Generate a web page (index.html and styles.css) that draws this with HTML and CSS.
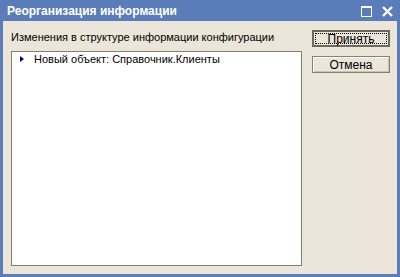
FILE: index.html
```html
<!DOCTYPE html>
<html lang="ru">
<head>
  <meta charset="UTF-8">
  <title>Реорганизация информации</title>
  <link rel="stylesheet" href="styles.css">
</head>
<body>
  <!-- окно диалога -->
  <div class="window">
    <div class="titlebar">
      <span class="title">Реорганизация информации</span>
      <div class="title-buttons">
        <span class="icon-max"></span>
        <svg class="icon-close" width="11" height="11" viewBox="0 0 11 11">
          <path d="M1 1 L10 10 M10 1 L1 10" stroke="#fff" stroke-width="2.4" fill="none"/>
        </svg>
      </div>
    </div>

    <div class="content">
      <div class="main">
        <div class="label">Изменения в структуре информации конфигурации</div>
        <div class="tree">
          <div class="tree-item">
            <span class="arrow"></span>
            <span>Новый объект: Справочник.Клиенты</span>
          </div>
        </div>
      </div>
      <div class="buttons">
        <button class="btn default">Принять</button>
        <button class="btn">Отмена</button>
      </div>
    </div>
  </div>
</body>
</html>
```

FILE: styles.css
```css
* { box-sizing: border-box; margin: 0; padding: 0; }
body {
  font-family: 'Liberation Sans', Arial, sans-serif;
  font-size: 11px;
  width: 400px;
  height: 277px;
  overflow: hidden;
}
.window {
  width: 400px;
  height: 277px;
  background-color: #5a7cb9;
  padding: 0 3px 3px 3px;
  display: flex;
  flex-direction: column;
}
.titlebar {
  height: 21px;
  display: flex;
  align-items: center;
  justify-content: space-between;
  padding-left: 4px;
  padding-right: 4px;
}
.title {
  color: #fff;
  font-weight: bold;
  font-size: 12px;
}
.title-buttons {
  display: flex;
  align-items: center;
  gap: 10px;
  margin-top: 2px;
}
.icon-max {
  width: 11px;
  height: 11px;
  border: 1px solid #fff;
  border-top-width: 2px;
}
.content {
  flex: 1;
  background-color: #ebe5da;
  display: flex;
  gap: 10px;
  padding: 8px 7px 8px 8px;
}
.main {
  flex: 1;
  display: flex;
  flex-direction: column;
}
.label {
  line-height: 17px;
  color: #000;
  margin-bottom: 5px;
}
.tree {
  flex: 1;
  background-color: #fff;
  border: 1px solid #858170;
  padding: 0 4px;
}
.tree-item {
  display: flex;
  align-items: center;
  gap: 10px;
  line-height: 14px;
  padding-left: 4px;
}
.arrow {
  width: 0;
  height: 0;
  border-top: 3.5px solid transparent;
  border-bottom: 3.5px solid transparent;
  border-left: 4px solid #00008b;
}
.buttons {
  width: 78px;
  display: flex;
  flex-direction: column;
  gap: 9px;
  padding-top: 1px;
}
.btn {
  height: 17px;
  font-family: 'Liberation Sans', Arial, sans-serif;
  font-size: 12px;
  line-height: 12px;
  color: #000;
  background-color: #ebe5da;
  border: 1px solid #858170;
  box-shadow: inset 1px 1px #fff, inset -1px -1px #c9c3b4;
  cursor: pointer;
}
.btn.default {
  border: 2px solid #6e6a5b;
  outline: 1px dotted #000;
  outline-offset: -4px;
  box-shadow: none;
}
```
